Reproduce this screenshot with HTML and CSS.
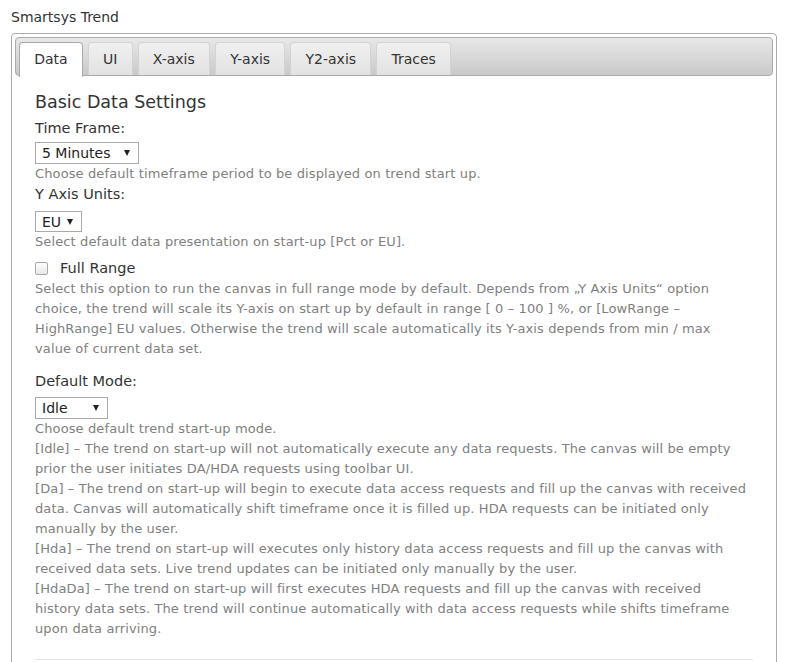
FILE: index.html
```html
<!DOCTYPE html>
<html>
<head>
<meta charset="utf-8">
<link rel="stylesheet" href="styles.css">
</head>
<body>
<div class="title">Smartsys Trend</div>
<div class="panel">
  <div class="tabbar">
    <div class="tab active">Data</div>
    <div class="tab">UI</div>
    <div class="tab">X-axis</div>
    <div class="tab">Y-axis</div>
    <div class="tab">Y2-axis</div>
    <div class="tab">Traces</div>
  </div>
  <div class="content">
    <h2 class="heading">Basic Data Settings</h2>

    <div class="label">Time Frame:</div>
    <div class="select sel-time"><span>5 Minutes</span><span class="arrow"></span></div>
    <div class="desc">Choose default timeframe period to be displayed on trend start up.</div>

    <div class="label label-tight">Y Axis Units:</div>
    <div class="select sel-eu"><span>EU</span><span class="arrow"></span></div>
    <div class="desc">Select default data presentation on start-up [Pct or EU].</div>

    <div class="check-row"><span class="checkbox"></span><span class="check-label">Full Range</span></div>
    <div class="desc desc-after-check">Select this option to run the canvas in full range mode by default. Depends from „Y Axis Units“ option<br>choice, the trend will scale its Y-axis on start up by default in range [ 0 – 100 ] %, or [LowRange –<br>HighRange] EU values. Otherwise the trend will scale automatically its Y-axis depends from min / max<br>value of current data set.</div>

    <div class="label label-gap">Default Mode:</div>
    <div class="select sel-mode"><span>Idle</span><span class="arrow"></span></div>
    <div class="desc">Choose default trend start-up mode.<br>[Idle] – The trend on start-up will not automatically execute any data requests. The canvas will be empty<br>prior the user initiates DA/HDA requests using toolbar UI.<br>[Da] – The trend on start-up will begin to execute data access requests and fill up the canvas with received<br>data. Canvas will automatically shift timeframe once it is filled up. HDA requests can be initiated only<br>manually by the user.<br>[Hda] – The trend on start-up will executes only history data access requests and fill up the canvas with<br>received data sets. Live trend updates can be initiated only manually by the user.<br>[HdaDa] – The trend on start-up will first executes HDA requests and fill up the canvas with received<br>history data sets. The trend will continue automatically with data access requests while shifts timeframe<br>upon data arriving.</div>

    <hr class="divider">
  </div>
</div>
</body>
</html>
```
FILE: styles.css
```css
html, body {
  margin: 0;
  padding: 0;
  background: #fff;
}
body {
  font-family: "DejaVu Sans", Verdana, sans-serif;
  color: #333;
  overflow: hidden;
  height: 662px;
}
.title {
  font-size: 14px;
  line-height: 20px;
  padding: 7px 0 0 11px;
  height: 26px;
  color: #333;
}
.panel {
  margin-left: 11px;
  width: 758px;
  border: 1px solid #aaa;
  border-radius: 4px;
  padding: 3px;
  height: 700px;
}
.tabbar {
  display: flex;
  gap: 5px;
  height: 33px;
  padding: 4px 3px 0 3px;
  border: 1px solid #aaa;
  border-radius: 4px;
  background: linear-gradient(#e8e8e8, #c9c9c9);
}
.tab {
  height: 32px;
  line-height: 32px;
  padding: 0 14.2px;
  font-size: 14px;
  color: #333;
  border: 1px solid #d3d3d3;
  border-bottom: none;
  border-radius: 4px 4px 0 0;
  background: linear-gradient(#f0f0f0, #e2e2e2);
}
.tab.active {
  background: #fff;
  border-color: #aaa;
  height: 34px;
  position: relative;
  z-index: 1;
}
.content {
  padding: 15px 20px 0 20px;
}
.heading {
  margin: 0;
  font-size: 17.5px;
  font-weight: normal;
  line-height: 22px;
  color: #333;
}
.label {
  font-size: 14.5px;
  line-height: 20px;
  margin-top: 5px;
  color: #333;
}
.label-tight {
  margin-top: 0;
}
.label-gap {
  margin-top: 12px;
}
.select {
  display: flex;
  align-items: center;
  justify-content: space-between;
  box-sizing: border-box;
  height: 22px;
  border: 1px solid #aaa;
  padding: 0 8px 0 6px;
  font-size: 14px;
  color: #222;
  margin-top: 4px;
}
.sel-time { width: 104px; }
.sel-eu { width: 47px; margin-top: 7px; height: 21px; }
.sel-mode { width: 73px; margin-top: 6px; }
.arrow {
  width: 0;
  height: 0;
  border-left: 3.5px solid transparent;
  border-right: 3.5px solid transparent;
  border-top: 6px solid #222;
}
.desc {
  font-size: 13px;
  letter-spacing: 0.12px;
  line-height: 20px;
  color: #808080;
  white-space: nowrap;
}
.desc-after-check {
  margin-top: 1px;
}
.check-row {
  display: flex;
  align-items: center;
  height: 20px;
  margin-top: 6px;
}
.checkbox {
  width: 11px;
  height: 11px;
  border: 1px solid #aaa;
  border-radius: 2px;
  background: linear-gradient(#fdfdfd, #e8e8e8);
  margin-right: 12px;
}
.check-label {
  font-size: 14.5px;
  color: #333;
}
.divider {
  border: none;
  border-top: 1px solid #e3e3e3;
  margin: 20px 0 0 0;
  width: 718px;
}
```
